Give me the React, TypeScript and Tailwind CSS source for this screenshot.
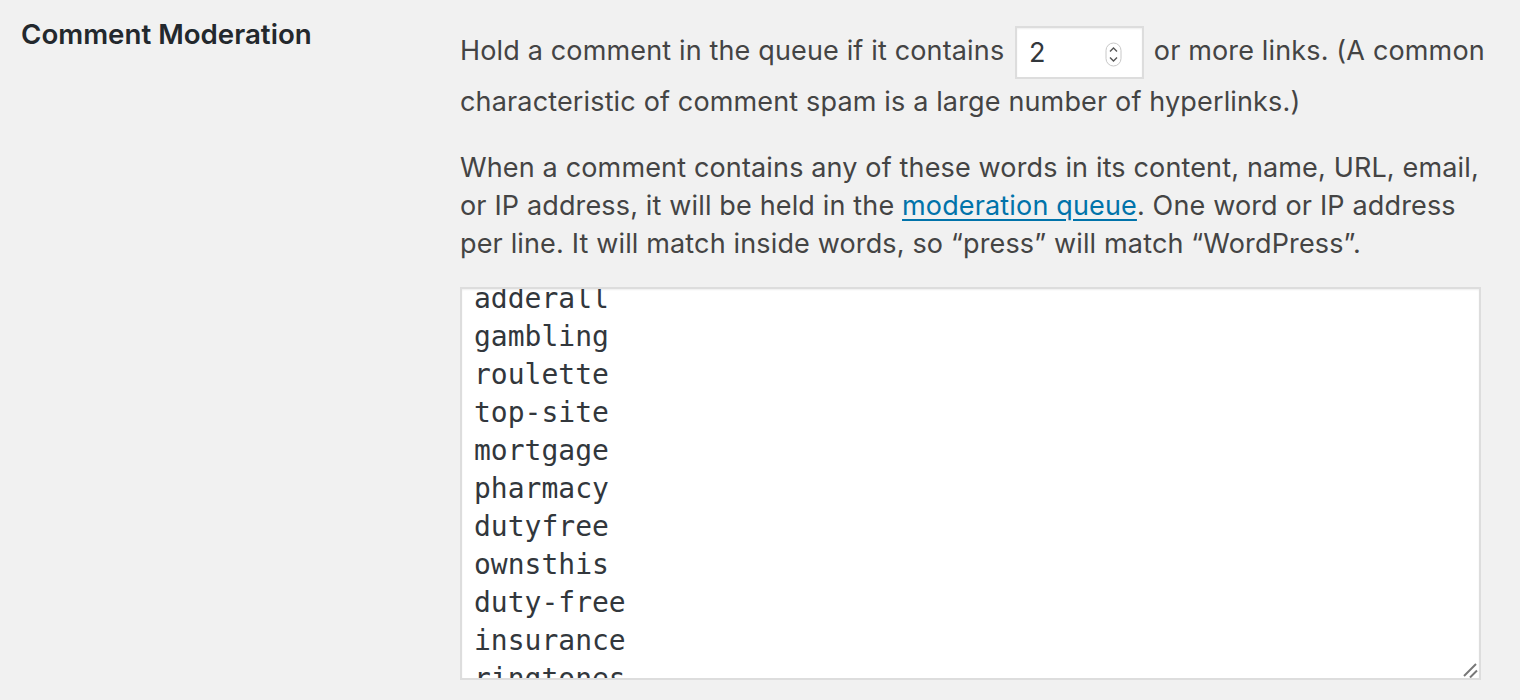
import React from "react";

const words = [
  "adderall",
  "gambling",
  "roulette",
  "top-site",
  "mortgage",
  "pharmacy",
  "dutyfree",
  "ownsthis",
  "duty-free",
  "insurance",
  "ringtones",
  "casino",
];

export default function App() {
  return (
    <div className="min-h-screen w-full bg-[#f1f1f1] font-['Inter',sans-serif] text-[#444]">
      <div className="flex">
        <div className="w-[460px] shrink-0 pl-[21px] pt-[16px]">
          <h2 className="text-[27.7px] font-semibold leading-[36px] text-[#23282d]">
            Comment Moderation
          </h2>
        </div>
        <div className="w-[1032px] shrink-0 pt-[26px] text-[27px] tracking-[0.15px]">
          <p className="leading-[50px]">
            Hold a comment in the queue if it contains{" "}
            <span className="relative -my-[2px] ml-[3px] mr-[2px] inline-flex h-[53px] w-[129px] items-center border-2 border-[#dddddd] bg-white pl-[12px] align-middle text-[#32373c] shadow-[inset_0_1px_2px_rgba(0,0,0,0.07)]">
              2
              <svg
                className="absolute right-[20px] top-[14px]"
                width="17"
                height="25"
                viewBox="0 0 17 25"
              >
                <rect x="1" y="1" width="15" height="23" rx="7.5" fill="#fff" stroke="#c8c8c8" strokeWidth="1" />
                <path d="M5 9.5 L8.5 6 L12 9.5" fill="none" stroke="#555" strokeWidth="1.4" />
                <path d="M5 15.5 L8.5 19 L12 15.5" fill="none" stroke="#555" strokeWidth="1.4" />
              </svg>
            </span>{" "}
            or more links. (A common characteristic of comment spam is a large number of hyperlinks.)
          </p>
          <p className="mt-[22px] leading-[38px]">
            When a comment contains any of these words in its content, name, URL, email, or IP address, it will be held in the{" "}
            <a href="#" className="text-[#0073aa] underline decoration-[2px] underline-offset-[4px]">
              moderation queue
            </a>
            . One word or IP address per line. It will match inside words, so “press” will match “WordPress”.
          </p>
          <div className="relative mt-[24px] h-[393px] w-[1021px] overflow-hidden border-2 border-[#dddddd] bg-white tracking-normal shadow-[inset_0_1px_2px_rgba(0,0,0,0.07)]">
            <div className="-mt-[9px] pl-[12px] font-['DejaVu_Sans_Mono',monospace] text-[28px] leading-[38px] text-[#32373c]">
              {words.map((w) => (
                <div key={w}>{w}</div>
              ))}
            </div>
            <svg className="absolute bottom-[0px] right-[0px]" width="16" height="16" viewBox="0 0 16 16">
              <path d="M1 14 L13 2" stroke="#777" strokeWidth="2" />
              <path d="M7 15.5 L14 8.5" stroke="#777" strokeWidth="2" />
            </svg>
          </div>
        </div>
      </div>
    </div>
  );
}
